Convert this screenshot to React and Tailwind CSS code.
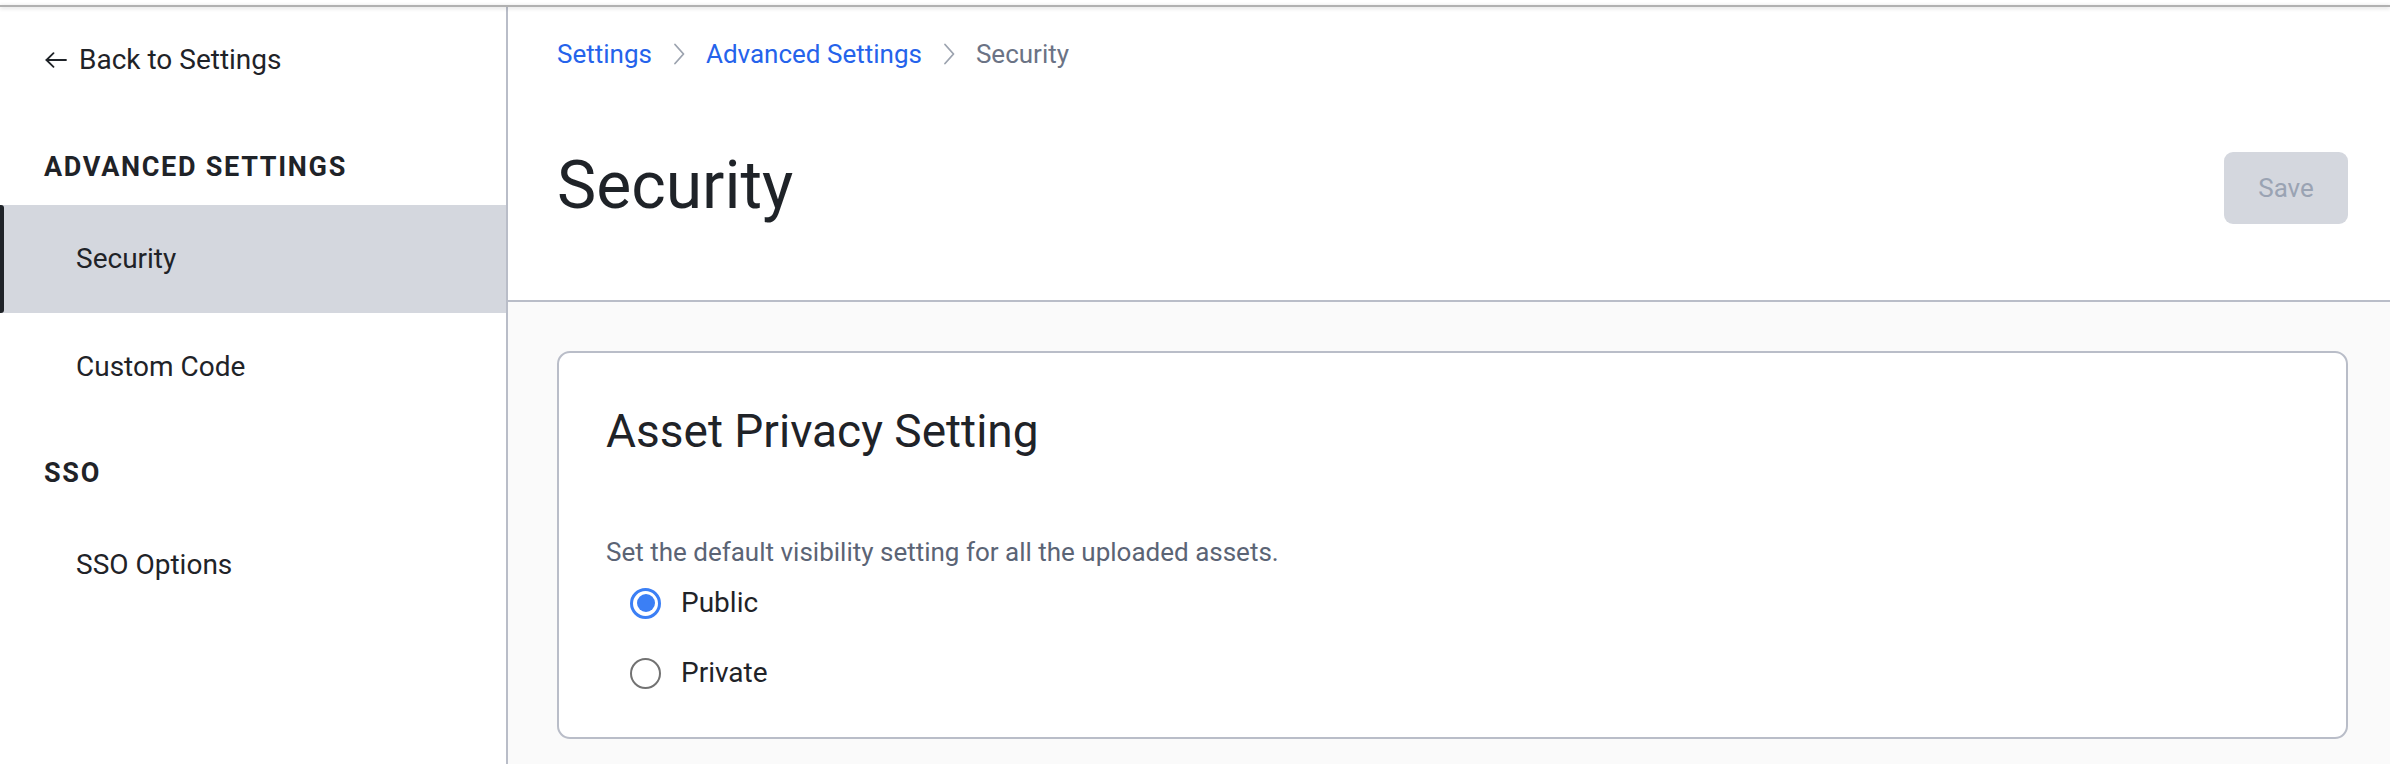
import React from "react";

function Chevron() {
  return (
    <svg width="12" height="22" viewBox="0 0 12 22" fill="none" className="shrink-0">
      <polyline points="2,1.5 10.5,11 2,20.5" stroke="#9ca3af" strokeWidth="1.8" strokeLinecap="round" strokeLinejoin="round" />
    </svg>
  );
}

function BackArrow() {
  return (
    <svg width="22" height="16" viewBox="0 0 22 16" fill="none" className="shrink-0">
      <line x1="1.5" y1="8" x2="21" y2="8" stroke="#1f2328" strokeWidth="1.8" strokeLinecap="round" />
      <polyline points="8.5,1.2 1.5,8 8.5,14.8" stroke="#1f2328" strokeWidth="1.8" strokeLinecap="round" strokeLinejoin="round" />
    </svg>
  );
}

function NavItem({ label, active }) {
  return (
    <div
      className={
        active
          ? "relative h-[108px] flex items-center pl-[76px] text-[28px] bg-[#d4d7de]"
          : "relative h-[108px] flex items-center pl-[76px] text-[28px]"
      }
    >
      {active && <span className="absolute left-0 top-0 bottom-0 w-[4px] rounded-r-[3px] bg-[#1f2328]" />}
      {label}
    </div>
  );
}

function Radio({ checked, label }) {
  return (
    <div className="h-[70px] flex items-center pl-[24px] gap-[20px]">
      {checked ? (
        <span className="w-[31px] h-[31px] rounded-full border-[3px] border-[#3b7ff5] flex items-center justify-center">
          <span className="w-[18px] h-[18px] rounded-full bg-[#3b7ff5]" />
        </span>
      ) : (
        <span className="w-[31px] h-[31px] rounded-full border-2 border-[#727272]" />
      )}
      <span className="text-[28px] text-[#1f2328]">{label}</span>
    </div>
  );
}

export default function App() {
  return (
    <div className="w-[2390px] h-[764px] bg-white flex flex-col overflow-hidden text-[#1f2328] [font-family:Roboto,'Liberation_Sans',sans-serif]">
      <div className="h-[5px] bg-white shrink-0" />
      <div className="h-[2px] bg-[#b1b1b1] shrink-0 relative z-10 shadow-[0_1px_4px_rgba(0,0,0,0.2)]" />
      <div className="flex flex-1 min-h-0">
        <aside className="w-[508px] shrink-0 border-r-2 border-[#b9bdc8] flex flex-col">
          <div className="h-[106px] flex items-center pl-[45px] gap-[12px] text-[28px]">
            <BackArrow />
            <span>Back to Settings</span>
          </div>
          <div className="mt-[16px] h-[76px] flex items-center pl-[44px] text-[27px] font-bold tracking-[1.7px]">
            ADVANCED SETTINGS
          </div>
          <NavItem label="Security" active />
          <NavItem label="Custom Code" />
          <div className="mt-[14px] h-[76px] flex items-center pl-[44px] text-[27px] font-bold tracking-[1.7px]">
            SSO
          </div>
          <NavItem label="SSO Options" />
        </aside>
        <main className="flex-1 min-w-0 flex flex-col">
          <header className="h-[295px] shrink-0 border-b-2 border-[#b9bdc8] pl-[49px] pr-[42px] flex flex-col">
            <nav className="mt-[27px] h-[40px] flex items-center gap-[21px] text-[26px]">
              <span className="text-[#2563eb]">Settings</span>
              <Chevron />
              <span className="text-[#2563eb]">Advanced Settings</span>
              <Chevron />
              <span className="text-[#6b7385]">Security</span>
            </nav>
            <div className="mt-[62px] h-[100px] flex items-center justify-between">
              <h1 className="text-[66px] leading-none font-normal">Security</h1>
              <button className="mt-[4px] w-[124px] h-[72px] rounded-[9px] bg-[#d4d7de] text-[#9aa3b3] text-[26px]">
                Save
              </button>
            </div>
          </header>
          <section className="flex-1 bg-[#fafafa] pt-[49px] pl-[49px] pr-[42px]">
            <div className="h-[388px] rounded-[13px] border-2 border-[#b9bdc8] bg-white pl-[47px] pt-[51px]">
              <h2 className="text-[46px] leading-[54px] font-normal">Asset Privacy Setting</h2>
              <p className="mt-[78px] text-[26px] leading-[32px] text-[#5b6475]">
                Set the default visibility setting for all the uploaded assets.
              </p>
              <Radio checked label="Public" />
              <Radio label="Private" />
            </div>
          </section>
        </main>
      </div>
    </div>
  );
}
